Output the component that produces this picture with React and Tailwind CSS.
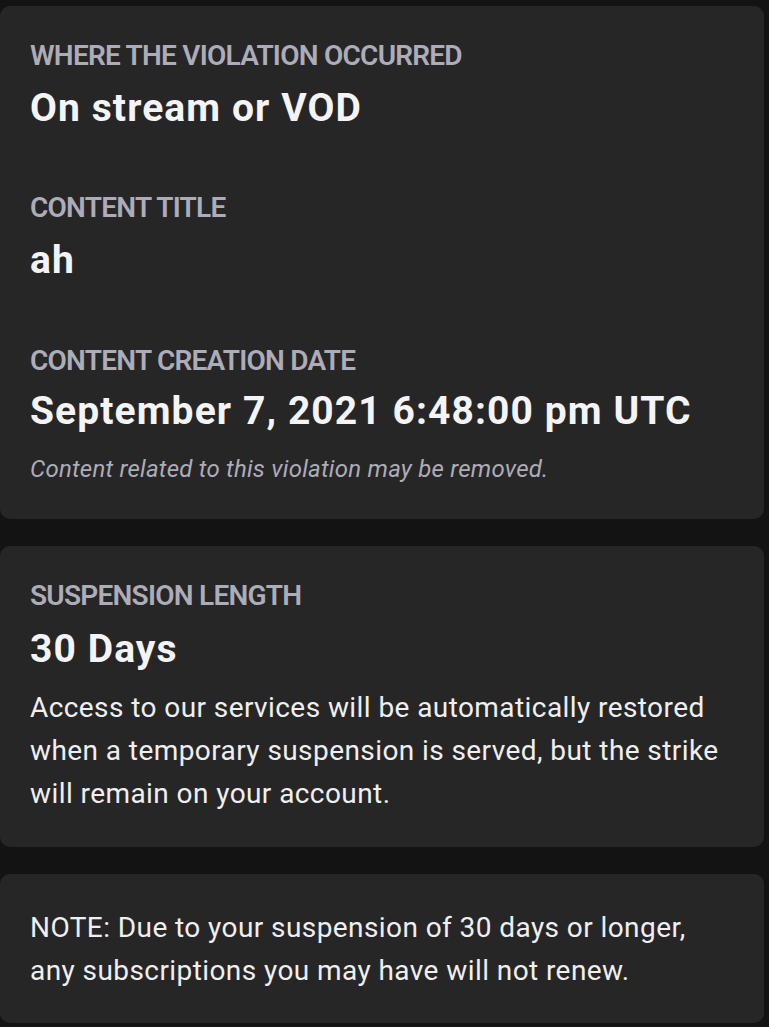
import React from 'react';

const font = { fontFamily: 'Roboto, "Liberation Sans", sans-serif' };

function Label({ children, className = '' }) {
  return (
    <div className={`text-[28px] leading-[32px] font-semibold text-[#adacb9] tracking-[-0.027em] ${className}`}>
      {children}
    </div>
  );
}

function Value({ children, className = '' }) {
  return (
    <div className={`text-[39px] leading-[44px] font-bold text-[#f4f4f6] tracking-[0.028em] ${className}`}>
      {children}
    </div>
  );
}

export default function App() {
  return (
    <div className="min-h-[1027px] bg-[#131313] pt-[6px] pr-[5px]" style={font}>
      <div className="bg-[#262626] rounded-[10px] px-[30px] pt-[34px] pb-[36px]">
        <Label>WHERE THE VIOLATION OCCURRED</Label>
        <Value className="mt-[14px]">On stream or VOD</Value>

        <Label className="mt-[62px]">CONTENT TITLE</Label>
        <Value className="mt-[14px]">ah</Value>

        <Label className="mt-[63px]">CONTENT CREATION DATE</Label>
        <Value className="mt-[12px]">September 7, 2021 6:48:00 pm UTC</Value>
        <p className="mt-[22px] text-[24px] leading-[28px] italic text-[#adadb8] tracking-[0.01em]">
          Content related to this violation may be removed.
        </p>
      </div>

      <div className="mt-[27px] bg-[#262626] rounded-[10px] px-[30px] pt-[34px] pb-[32px]">
        <Label>SUSPENSION LENGTH</Label>
        <Value className="mt-[15px]">30 Days</Value>
        <p className="mt-[15px] text-[28px] leading-[43px] text-[#efeff1] tracking-[0.015em]">
          Access to our services will be automatically restored when a temporary suspension is served, but the strike will remain on your account.
        </p>
      </div>

      <div className="mt-[27px] bg-[#262626] rounded-[10px] px-[30px] pt-[32px] pb-[31px]">
        <p className="text-[28px] leading-[43px] text-[#efeff1] tracking-[0.015em]">
          NOTE: Due to your suspension of 30 days or longer, any subscriptions you may have will not renew.
        </p>
      </div>
    </div>
  );
}
